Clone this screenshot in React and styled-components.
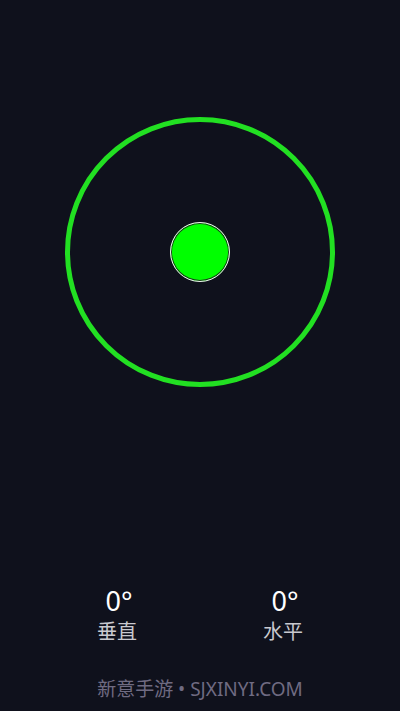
import React from 'react';
import styled, { createGlobalStyle } from 'styled-components';

const GlobalStyle = createGlobalStyle`
  html, body {
    margin: 0;
    padding: 0;
    background: #0f111c;
  }
  body {
    font-family: "Noto Sans", "Noto Sans CJK SC", sans-serif;
  }
`;

const Screen = styled.div`
  width: 400px;
  height: 711px;
  background: #0f111c;
  display: flex;
  flex-direction: column;
  overflow: hidden;
`;

const Stage = styled.div`
  display: flex;
  justify-content: center;
  padding-top: 117px;
`;

const Ring = styled.div`
  width: 270px;
  height: 270px;
  box-sizing: border-box;
  border: 5px solid #22e022;
  border-radius: 50%;
  display: flex;
  align-items: center;
  justify-content: center;
`;

const Bubble = styled.div`
  width: 60px;
  height: 60px;
  box-sizing: border-box;
  border-radius: 50%;
  background: #00ff00;
  border: 1px solid #f2f2f2;
  box-shadow: inset 0 0 0 1px #1a3a1a;
`;

const Readings = styled.div`
  margin-top: auto;
  display: grid;
  grid-template-columns: 1fr 1fr;
  padding: 0 34px;
`;

const Reading = styled.div`
  display: flex;
  flex-direction: column;
  align-items: center;
`;

const Angle = styled.div`
  color: #ffffff;
  font-size: 27px;
  line-height: 30px;
  padding-left: 4px;
`;

const Label = styled.div`
  color: #c9c9cf;
  font-size: 20px;
  line-height: 26px;
  margin-top: 2px;
  font-family: "Noto Sans CJK SC", sans-serif;
`;

const Footer = styled.div`
  text-align: center;
  color: #6f6b82;
  font-size: 19px;
  line-height: 24px;
  margin: 33px 0 10px;
  font-family: "Noto Sans", "Noto Sans CJK SC", sans-serif;
`;

function App() {
  return (
    <Screen>
      <GlobalStyle />
      <Stage>
        <Ring>
          <Bubble />
        </Ring>
      </Stage>
      <Readings>
        <Reading>
          <Angle>0°</Angle>
          <Label>垂直</Label>
        </Reading>
        <Reading>
          <Angle>0°</Angle>
          <Label>水平</Label>
        </Reading>
      </Readings>
      <Footer>新意手游 • SJXINYI.COM</Footer>
    </Screen>
  );
}

export default App;
